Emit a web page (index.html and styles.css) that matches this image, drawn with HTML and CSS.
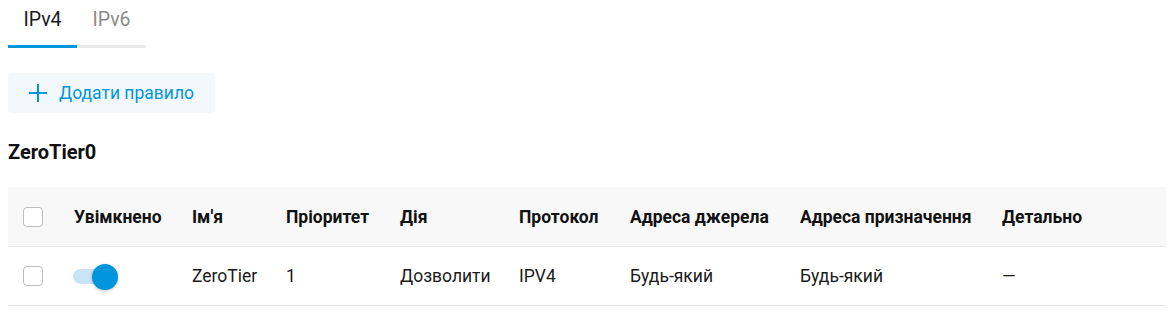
FILE: index.html
```html
<!DOCTYPE html>
<html lang="uk">
<head>
    <meta charset="UTF-8">
    <meta name="viewport" content="width=device-width, initial-scale=1.0">
    <title>Правила</title>
    <link rel="stylesheet" href="styles.css">
</head>
<body>
    <!-- вкладки -->
    <div class="tabs">
        <div class="tab active">IPv4</div>
        <div class="tab">IPv6</div>
    </div>

    <button class="add-btn">
        <svg width="20" height="20" viewBox="0 0 20 20">
            <path d="M10 1v18M1 10h18" stroke="currentColor" stroke-width="2" fill="none"/>
        </svg>
        Додати правило
    </button>

    <h2 class="zone-title">ZeroTier0</h2>

    <!-- таблиця правил -->
    <table class="rules">
        <colgroup>
            <col style="width:51px">
            <col style="width:118px">
            <col style="width:94px">
            <col style="width:114px">
            <col style="width:119px">
            <col style="width:111px">
            <col style="width:170px">
            <col style="width:202px">
            <col>
        </colgroup>
        <thead>
            <tr>
                <th><span class="check"></span></th>
                <th>Увімкнено</th>
                <th>Ім'я</th>
                <th>Пріоритет</th>
                <th>Дія</th>
                <th>Протокол</th>
                <th>Адреса джерела</th>
                <th>Адреса призначення</th>
                <th>Детально</th>
            </tr>
        </thead>
        <tbody>
            <tr>
                <td><span class="check"></span></td>
                <td><span class="switch"><span class="knob"></span></span></td>
                <td>ZeroTier</td>
                <td>1</td>
                <td>Дозволити</td>
                <td>IPV4</td>
                <td>Будь-який</td>
                <td>Будь-який</td>
                <td>—</td>
            </tr>
        </tbody>
    </table>
</body>
</html>
```

FILE: styles.css
```css
body
{
    margin: 0 10px 0 8px;
    font-family: Roboto, "Liberation Sans", Arial, sans-serif;
    color: #1a1a1a;
    background: #fff;
}

/* вкладки IPv4 / IPv6 */
.tabs
{
    display: flex;
}

.tab
{
    width: 69px;
    text-align: center;
    font-size: 19.5px;
    line-height: 24px;
    padding: 8px 0 13px;
    color: #8a8a8a;
    border-bottom: 3px solid #ebebeb;
}

.tab.active
{
    color: #1a1a1a;
    border-bottom-color: #0095dc;
}

/* кнопка додавання */
.add-btn
{
    display: flex;
    align-items: center;
    gap: 11px;
    margin-top: 25px;
    height: 40px;
    padding: 0 21px 0 20px;
    border: none;
    border-radius: 4px;
    background: #f2f8fc;
    color: #0095dc;
    font-family: inherit;
    font-size: 17.5px;
}

.zone-title
{
    margin: 27px 0 0;
    font-size: 20px;
    line-height: 24px;
    font-weight: 700;
    color: #111;
}

/* таблиця */
.rules
{
    width: 100%;
    margin-top: 23px;
    border-collapse: collapse;
    table-layout: fixed;
    font-size: 17.5px;
}

.rules th,
.rules td
{
    text-align: left;
    padding: 0 0 0 15px;
    white-space: nowrap;
    vertical-align: middle;
    border-bottom: 1px solid #e6e6e6;
}

.rules th
{
    height: 59px;
    background: #f8f8f8;
    font-weight: 700;
    color: #111;
}

.rules td
{
    height: 58px;
}

.check
{
    display: block;
    width: 18px;
    height: 18px;
    border: 1px solid #bdbdbd;
    border-radius: 4px;
    background: #fff;
}

.switch
{
    display: block;
    position: relative;
    width: 38px;
    height: 15px;
    margin-left: -1px;
    border-radius: 8px;
    background: #c8e4f5;
}

.switch .knob
{
    position: absolute;
    right: -7px;
    top: -5px;
    width: 26px;
    height: 26px;
    border-radius: 50%;
    background: #0095dc;
    box-shadow: 0 1px 3px rgba(0, 0, 0, 0.25);
}
```
